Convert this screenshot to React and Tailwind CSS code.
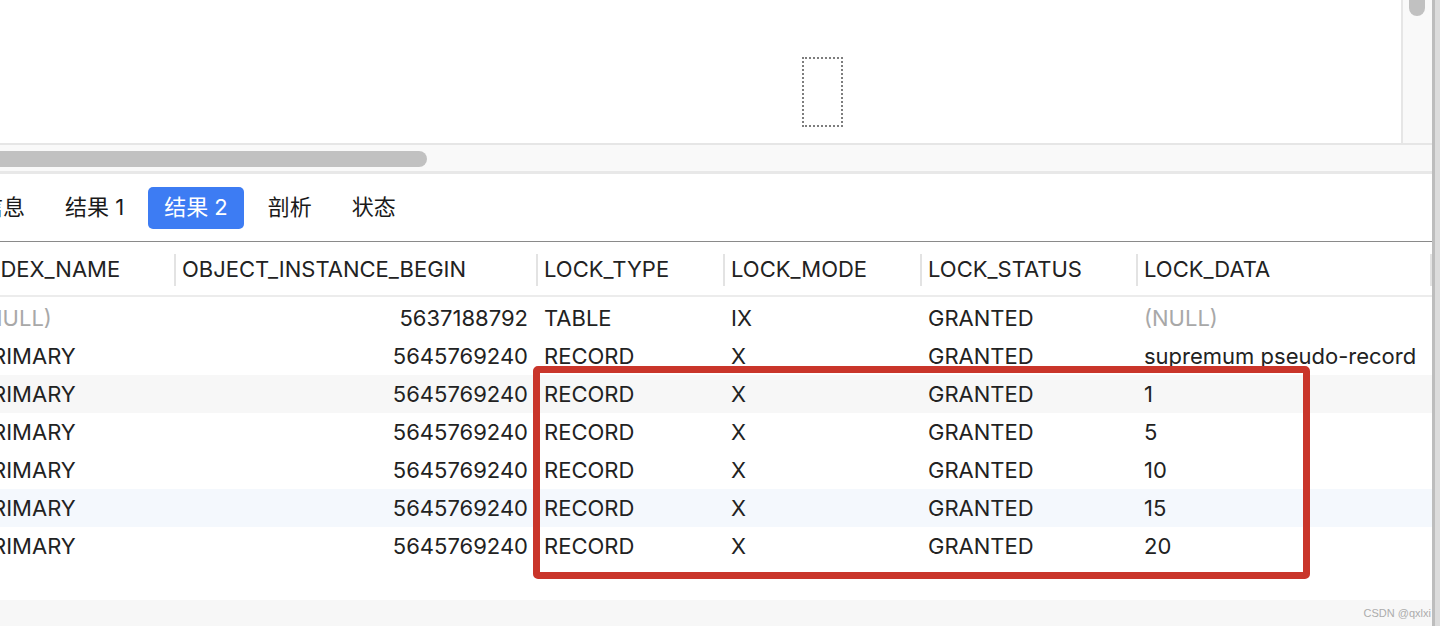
import React from 'react';

const cols = [
  { key: 'index', label: 'INDEX_NAME', w: 'w-[174px]' },
  { key: 'begin', label: 'OBJECT_INSTANCE_BEGIN', w: 'w-[362px]' },
  { key: 'type', label: 'LOCK_TYPE', w: 'w-[187px]' },
  { key: 'mode', label: 'LOCK_MODE', w: 'w-[197px]' },
  { key: 'status', label: 'LOCK_STATUS', w: 'w-[216px]' },
  { key: 'data', label: 'LOCK_DATA', w: 'w-[294px]' },
];

const rows = [
  { index: null, begin: '5637188792', type: 'TABLE', mode: 'IX', status: 'GRANTED', data: null },
  { index: 'PRIMARY', begin: '5645769240', type: 'RECORD', mode: 'X', status: 'GRANTED', data: 'supremum pseudo-record' },
  { index: 'PRIMARY', begin: '5645769240', type: 'RECORD', mode: 'X', status: 'GRANTED', data: '1', bg: 'bg-[#f7f7f7]' },
  { index: 'PRIMARY', begin: '5645769240', type: 'RECORD', mode: 'X', status: 'GRANTED', data: '5' },
  { index: 'PRIMARY', begin: '5645769240', type: 'RECORD', mode: 'X', status: 'GRANTED', data: '10' },
  { index: 'PRIMARY', begin: '5645769240', type: 'RECORD', mode: 'X', status: 'GRANTED', data: '15', bg: 'bg-[#f4f8fd]' },
  { index: 'PRIMARY', begin: '5645769240', type: 'RECORD', mode: 'X', status: 'GRANTED', data: '20' },
];

const tabs = ['信息', '结果 1', '结果 2', '剖析', '状态'];

function Null() {
  return <span className="text-[#a8a8a8]">(NULL)</span>;
}

export default function App() {
  return (
    <div className="relative w-[1440px] h-[626px] overflow-hidden bg-white flex text-[#222] font-['Inter','Noto_Sans_CJK_SC',sans-serif]">
      <div className="w-[1432px] flex flex-col">
        {/* editor area */}
        <div className="h-[143px] flex">
          <div className="relative w-[1403px] bg-white border-r-2 border-[#e6e6e6]">
            <div className="absolute left-[802px] top-[57px] w-[41px] h-[70px] border-2 border-dotted border-[#7d7d7d]" />
          </div>
          <div className="flex-1 bg-[#f9f9f9] pl-[6px]">
            <div className="w-[16px] h-[16px] rounded-b-full bg-[#c1c1c1]" />
          </div>
        </div>

        {/* horizontal scrollbar */}
        <div className="h-[31px] bg-[#f9f9f9] border-t-2 border-[#e6e6e6] border-b-[3px] border-b-[#e8e8e8] pt-[6px]">
          <div className="w-[427px] h-[16px] rounded-r-full bg-[#c1c1c1]" />
        </div>

        {/* tabs */}
        <div className="h-[68px] flex items-center gap-2 border-b border-[#8a8a8a] text-[22px]">
          <div className="flex items-center gap-2 -ml-[35px]">
            {tabs.map((t, i) => (
              <div
                key={t}
                className={`h-[42px] px-4 flex items-center rounded-[5px] whitespace-nowrap ${
                  i === 2 ? 'bg-[#3d7cf3] text-white' : 'text-[#1a1a1a]'
                }`}
              >
                {t}
              </div>
            ))}
          </div>
        </div>

        {/* header */}
        <div className="h-[55px] flex border-b-2 border-[#ececec] text-[22px] pt-[2px]">
          {cols.map((c, i) => (
            <div key={c.key} className={`${c.w} shrink-0 flex items-center overflow-hidden`}>
              {i > 0 && <div className="w-[2px] h-[32px] bg-[#e3e3e3] shrink-0" />}
              <span className={`whitespace-nowrap ${i === 0 ? '-ml-[22px]' : 'pl-[6px]'}`}>{c.label}</span>
            </div>
          ))}
          <div className="w-[2px] h-[32px] bg-[#e3e3e3] self-center" />
        </div>

        {/* body */}
        <div className="pt-[2px] text-[22px]">
          {rows.map((r, idx) => (
            <div key={idx} className={`h-[38px] flex items-center ${r.bg || ''}`}>
              <div className="w-[174px] shrink-0 overflow-hidden whitespace-nowrap">
                <span className="-ml-[22px] inline-block">{r.index ? r.index : <Null />}</span>
              </div>
              <div className="w-[362px] shrink-0 text-right pr-[8px]">{r.begin}</div>
              <div className="w-[187px] shrink-0 pl-[8px]">{r.type}</div>
              <div className="w-[197px] shrink-0 pl-[8px]">{r.mode}</div>
              <div className="w-[216px] shrink-0 pl-[8px]">{r.status}</div>
              <div className="w-[294px] shrink-0 pl-[8px] whitespace-nowrap">{r.data ? r.data : <Null />}</div>
            </div>
          ))}
        </div>

        <div className="flex-1" />

        {/* footer */}
        <div className="h-[26px] bg-[#f7f7f7] flex items-center justify-end pr-[1px] text-[11px] text-[#acacac] font-['Liberation_Sans',sans-serif]">
          CSDN @qxlxi
        </div>
      </div>

      {/* window edge */}
      <div className="w-[8px] flex">
        <div className="w-[3px] bg-[#bdbdbd]" />
        <div className="flex-1 bg-[#dcdcdc]" />
      </div>

      {/* red annotation box */}
      <div className="absolute left-[533px] top-[366px] w-[777px] h-[213px] border-[7px] border-[#c9352a] rounded-[5px]" />
    </div>
  );
}
